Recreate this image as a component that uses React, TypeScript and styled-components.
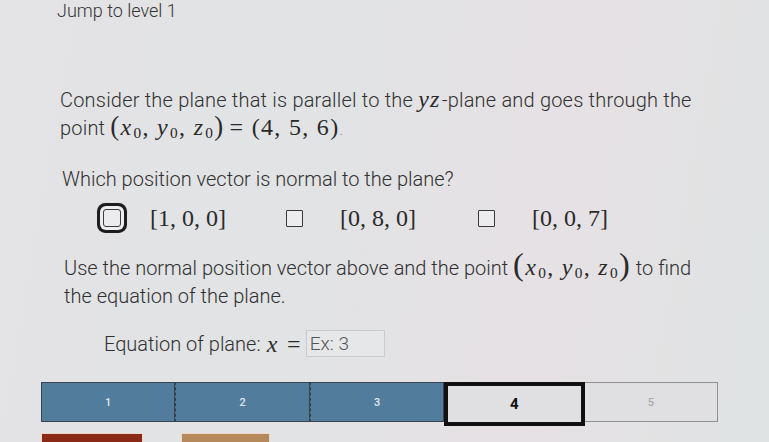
import React from 'react';
import styled, { createGlobalStyle } from 'styled-components';

const GlobalStyle = createGlobalStyle`
  html, body {
    margin: 0;
    padding: 0;
    background: #e2e2e5;
  }
  body {
    width: 769px;
    height: 442px;
    overflow: hidden;
    font-family: Roboto, 'Liberation Sans', sans-serif;
    color: #333;
  }
`;

const Page = styled.div`
  display: flex;
  flex-direction: column;
  width: 769px;
  height: 442px;
  overflow: hidden;
  background: linear-gradient(100deg, #e4e3e6 0%, #e1e3e4 40%, #e6e1e4 70%, #dfe3e3 100%);
`;

const LevelHeader = styled.div`
  padding: 1px 0 0 57px;
  height: 21px;
  font-size: 18px;
  line-height: 20px;
  font-weight: 300;
  color: #333;
`;

const Content = styled.div`
  display: flex;
  flex-direction: column;
  padding: 65px 0 0 60px;
`;

const Paragraph = styled.p<{ $indent?: number; $gap?: number; $spacing?: number }>`
  margin: 0 0 ${(p) => p.$gap ?? 0}px ${(p) => p.$indent ?? 0}px;
  font-size: 20px;
  line-height: 28px;
  font-weight: 300;
  letter-spacing: ${(p) => p.$spacing ?? 0}px;
  color: #303030;
`;

const M = styled.span<{ $size?: number }>`
  font-family: 'Liberation Serif', 'DejaVu Serif', serif;
  font-size: ${(p) => p.$size ?? 24}px;
  font-weight: 400;
  line-height: 20px;
  letter-spacing: 1.3px;
  color: #2a2a2a;
`;

const V = styled.i`
  font-style: italic;
  font-weight: 400;
  padding-right: 1px;
`;

const Sub = styled.sub`
  font-size: 0.64em;
  vertical-align: -3px;
  line-height: 0;
  font-style: normal;
`;

const Paren = styled.span<{ $big?: boolean }>`
  font-size: ${(p) => (p.$big ? 1.35 : 1.12)}em;
  line-height: 0;
`;

const Dot = styled.span`
  font-size: 14px;
  color: #888;
`;

const Options = styled.div`
  display: flex;
  align-items: center;
  height: 44px;
  margin: 3px 0 14px 37px;
`;

const Option = styled.label<{ $w: number }>`
  display: flex;
  align-items: center;
  width: ${(p) => p.$w}px;
`;

const Box = styled.span<{ $focus?: boolean }>`
  box-sizing: border-box;
  display: inline-block;
  width: 17px;
  height: 17px;
  margin: 0 37px 0 0;
  border: 1.5px solid #3a3a3a;
  border-radius: 1px;
  background: #ececee;
  ${(p) =>
    p.$focus
      ? `
    width: 18px;
    height: 18px;
    margin: 0 29px 0 6px;
    border-radius: 3px;
    box-shadow: 0 0 0 3px #eceef0, 0 0 0 6px #1d1d1d;
  `
      : ''}
`;

const Vec = styled.span`
  font-family: 'Liberation Serif', 'DejaVu Serif', serif;
  font-size: 24px;
  color: #2a2a2a;
`;

const EquationRow = styled.div`
  display: flex;
  align-items: center;
  margin: 20px 0 0 44px;
  font-size: 20px;
  font-weight: 300;
  color: #303030;
`;

const EqMath = styled(M)`
  margin: 0 4px 0 6px;
  word-spacing: 0;
`;

const AnswerInput = styled.div`
  box-sizing: border-box;
  width: 79px;
  height: 27px;
  padding: 1px 3px 0;
  border: 1px solid #c9cbcd;
  background: #e6e7e9;
  font-size: 19px;
  line-height: 24px;
  font-weight: 300;
  color: #555;
`;

const Progress = styled.div`
  display: flex;
  align-items: center;
  margin: 22px 0 0 41px;
  width: 677px;
  height: 46px;
`;

const Segment = styled.div<{ $done?: boolean; $current?: boolean }>`
  box-sizing: border-box;
  flex: 1;
  display: flex;
  align-items: center;
  justify-content: center;
  height: 40px;
  background: ${(p) => (p.$done ? '#517c9c' : '#e0dfe2')};
  border: 1px solid #37444f;
  border-left: 1px dashed #2e3f4c;
  color: ${(p) => (p.$done ? '#dfe8ee' : '#a7a9ab')};
  font-size: 11px;
  font-weight: 500;
  ${(p) =>
    p.$current
      ? `
    height: 44px;
    margin-top: 4px;
    border: 4px solid #111;
    color: #111;
    font-size: 15px;
    font-weight: 700;
  `
      : ''}
  ${(p) => (!p.$done && !p.$current ? 'border: 1px solid #8d8f91; border-left: none;' : '')}
  &:first-child {
    border-left: 1px solid #37444f;
  }
`;

const Buttons = styled.div`
  display: flex;
  gap: 38px;
  margin: 8px 0 0 41px;
`;

const Button = styled.div<{ $color: string; $w: number }>`
  box-sizing: border-box;
  width: ${(p) => p.$w}px;
  height: 30px;
  background: ${(p) => p.$color};
  border: 1px solid #f0d8c8;
`;

const Point = ({ big }: { big?: boolean }) => (
  <M>
    <Paren $big={big}>(</Paren>
    <V>x</V>
    <Sub>0</Sub>, <V>y</V>
    <Sub>0</Sub>, <V>z</V>
    <Sub>0</Sub>
    <Paren $big={big}>)</Paren>
  </M>
);

const vectors = ['[1, 0, 0]', '[0, 8, 0]', '[0, 0, 7]'];
const optionWidths = [189, 192, 192];
const levels = [1, 2, 3, 4, 5];

export default function App() {
  return (
    <>
      <GlobalStyle />
      <Page>
        <LevelHeader>Jump to level 1</LevelHeader>
        <Content>
          <Paragraph $gap={21} $spacing={0.2}>
            Consider the plane that is parallel to the <M><V>yz</V></M>-plane and goes through the
            <br />
            point <Point /> <M>= (4, 5, 6)</M>
            <Dot>.</Dot>
          </Paragraph>
          <Paragraph $indent={2}>Which position vector is normal to the plane?</Paragraph>
          <Options>
            {vectors.map((v, i) => (
              <Option key={v} $w={optionWidths[i]}>
                <Box $focus={i === 0} />
                <Vec>{v}</Vec>
              </Option>
            ))}
          </Options>
          <Paragraph $indent={4}>
            Use the normal position vector above and the point <Point big /> to find
            <br />
            the equation of the plane.
          </Paragraph>
          <EquationRow>
            Equation of plane:
            <EqMath><V>x</V> =</EqMath>
            <AnswerInput>Ex: 3</AnswerInput>
          </EquationRow>
        </Content>
        <Progress>
          {levels.map((n) => (
            <Segment key={n} $done={n < 4} $current={n === 4}>
              {n}
            </Segment>
          ))}
        </Progress>
        <Buttons>
          <Button $color="#8a2a16" $w={102} />
          <Button $color="#b5895b" $w={89} />
        </Buttons>
      </Page>
    </>
  );
}
